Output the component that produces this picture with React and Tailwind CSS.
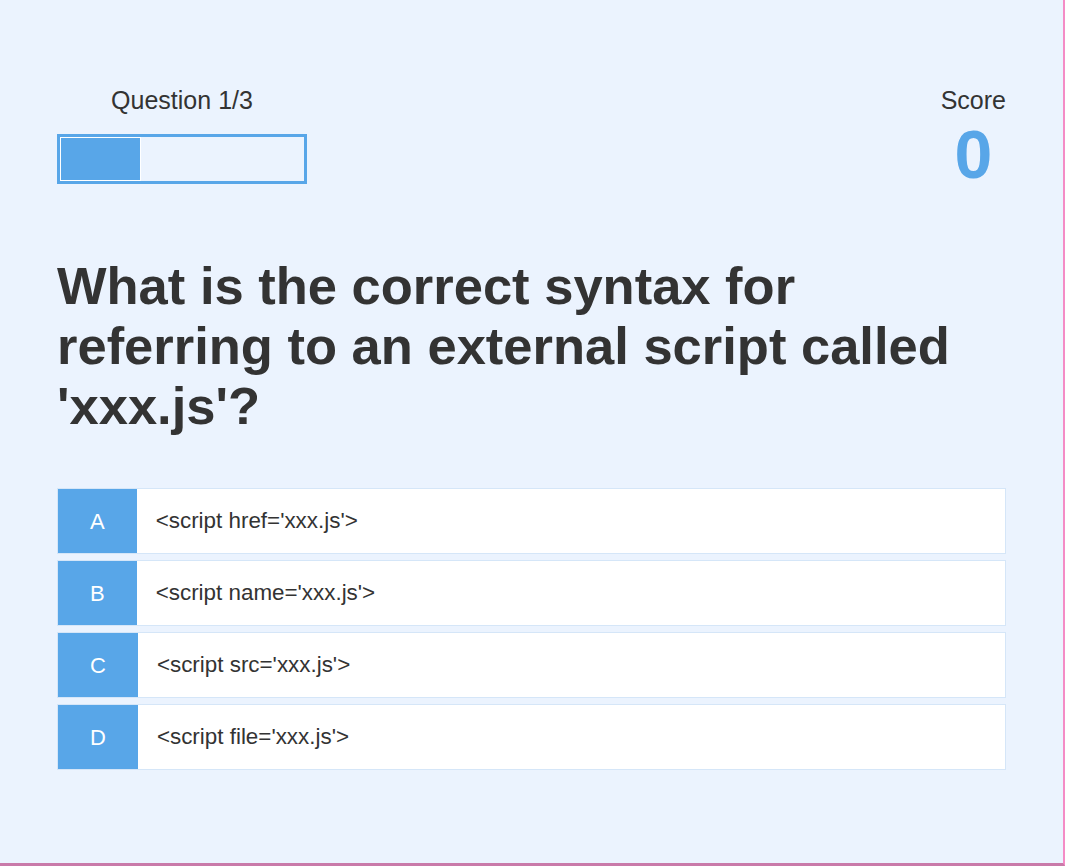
import { useState } from 'react';

const question = {
    text: "What is the correct syntax for referring to an external script called 'xxx.js'?",
    options: [
        { key: 'A', label: "<script href='xxx.js'>" },
        { key: 'B', label: "<script name='xxx.js'>" },
        { key: 'C', label: "<script src='xxx.js'>" },
        { key: 'D', label: "<script file='xxx.js'>" },
    ],
};

export default function App() {
    const [score] = useState(0);
    const current = 1;
    const total = 3;

    return (
        <div className="w-[1065px] h-[866px] bg-[#ebf3fe] border-r-2 border-b-[3px] border-r-[#f48cc6] border-b-[#c97aa9] font-['Liberation_Sans',Arial,sans-serif] text-[#333333]">
            <div className="px-[57px] pt-[85px]">
                <div className="flex items-start justify-between">
                    <div className="w-[250px] flex flex-col items-center">
                        <p className="text-[25px] leading-[30px]">Question {current}/{total}</p>
                        <div className="mt-[19px] w-[250px] h-[50px] border-[3px] border-[#58a6e8] flex">
                            <div
                                className="h-full bg-[#58a6e8] border border-white"
                                style={{ width: `${(current / total) * 100}%` }}
                            />
                        </div>
                    </div>
                    <div className="flex flex-col items-center">
                        <p className="text-[25px] leading-[30px]">Score</p>
                        <p className="mt-[5px] text-[68px] leading-[68px] font-bold text-[#58a6e8]">{score}</p>
                    </div>
                </div>

                <h1 className="mt-[68px] text-[52.5px] leading-[60px] font-bold text-[#333333]">{question.text}</h1>

                <div className="mt-[52px] flex flex-col gap-[6px]">
                    {question.options.map((opt) => (
                        <button
                            key={opt.key}
                            className="h-[66px] flex items-stretch bg-white border border-[#d5e6f8] text-left"
                        >
                            <span className="px-8 flex items-center bg-[#58a6e8] text-white text-[22px]">{opt.key}</span>
                            <span className="ml-[19px] flex items-center text-[22.4px] text-[#333333]">{opt.label}</span>
                        </button>
                    ))}
                </div>
            </div>
        </div>
    );
}
